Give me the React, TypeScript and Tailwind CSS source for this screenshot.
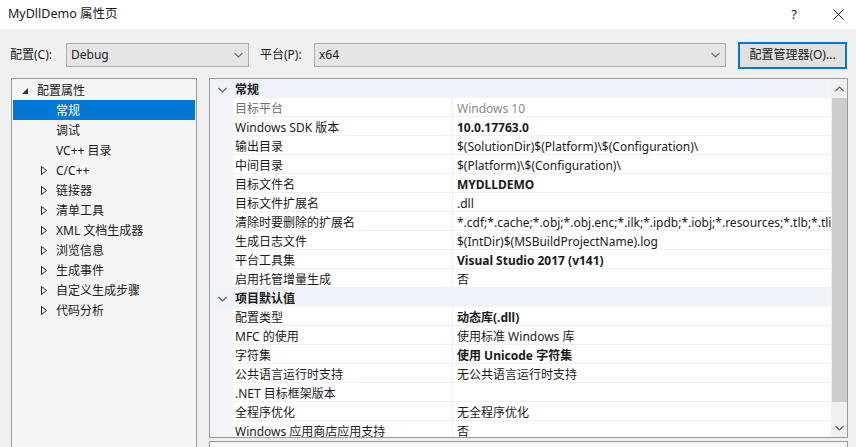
import { ReactNode } from 'react'

// 属性页数据
type Row =
  | { kind: 'cat'; name: string }
  | { kind: 'prop'; name: string; value: string; bold?: boolean; dim?: boolean }

const rows: Row[] = [
  { kind: 'cat', name: '常规' },
  { kind: 'prop', name: '目标平台', value: 'Windows 10', dim: true },
  { kind: 'prop', name: 'Windows SDK 版本', value: '10.0.17763.0', bold: true },
  { kind: 'prop', name: '输出目录', value: '$(SolutionDir)$(Platform)\\$(Configuration)\\' },
  { kind: 'prop', name: '中间目录', value: '$(Platform)\\$(Configuration)\\' },
  { kind: 'prop', name: '目标文件名', value: 'MYDLLDEMO', bold: true },
  { kind: 'prop', name: '目标文件扩展名', value: '.dll' },
  {
    kind: 'prop',
    name: '清除时要删除的扩展名',
    value: '*.cdf;*.cache;*.obj;*.obj.enc;*.ilk;*.ipdb;*.iobj;*.resources;*.tlb;*.tli;*.tlh;*.tmp;*.rsp',
  },
  { kind: 'prop', name: '生成日志文件', value: '$(IntDir)$(MSBuildProjectName).log' },
  { kind: 'prop', name: '平台工具集', value: 'Visual Studio 2017 (v141)', bold: true },
  { kind: 'prop', name: '启用托管增量生成', value: '否' },
  { kind: 'cat', name: '项目默认值' },
  { kind: 'prop', name: '配置类型', value: '动态库(.dll)', bold: true },
  { kind: 'prop', name: 'MFC 的使用', value: '使用标准 Windows 库' },
  { kind: 'prop', name: '字符集', value: '使用 Unicode 字符集', bold: true },
  { kind: 'prop', name: '公共语言运行时支持', value: '无公共语言运行时支持' },
  { kind: 'prop', name: '.NET 目标框架版本', value: '' },
  { kind: 'prop', name: '全程序优化', value: '无全程序优化' },
  { kind: 'prop', name: 'Windows 应用商店应用支持', value: '否' },
]

const tree: { label: string; level: 0 | 1; arrow?: 'open' | 'closed'; selected?: boolean }[] = [
  { label: '配置属性', level: 0, arrow: 'open' },
  { label: '常规', level: 1, selected: true },
  { label: '调试', level: 1 },
  { label: 'VC++ 目录', level: 1 },
  { label: 'C/C++', level: 1, arrow: 'closed' },
  { label: '链接器', level: 1, arrow: 'closed' },
  { label: '清单工具', level: 1, arrow: 'closed' },
  { label: 'XML 文档生成器', level: 1, arrow: 'closed' },
  { label: '浏览信息', level: 1, arrow: 'closed' },
  { label: '生成事件', level: 1, arrow: 'closed' },
  { label: '自定义生成步骤', level: 1, arrow: 'closed' },
  { label: '代码分析', level: 1, arrow: 'closed' },
]

function Chevron({ up = false, color = '#606060' }: { up?: boolean; color?: string }) {
  return (
    <svg width="9" height="6" viewBox="0 0 9 6">
      <polyline
        points={up ? '0.5,5 4.5,1 8.5,5' : '0.5,1 4.5,5 8.5,1'}
        fill="none"
        stroke={color}
        strokeWidth="1.2"
      />
    </svg>
  )
}

function Combo({ value, className }: { value: string; className: string }) {
  return (
    <div
      className={`h-[24px] flex items-center justify-between pl-[4px] pr-[5px] bg-[#e5e5e5] border border-[#adadad] ${className}`}
    >
      <span>{value}</span>
      <Chevron color="#707070" />
    </div>
  )
}

function TreeArrow({ kind }: { kind: 'open' | 'closed' }) {
  if (kind === 'open') {
    return (
      <svg width="6" height="6" viewBox="0 0 6 6">
        <polygon points="6,0 6,6 0,6" fill="#333" />
      </svg>
    )
  }
  return (
    <svg width="6" height="9" viewBox="0 0 6 9">
      <polygon points="0.5,0.5 5.5,4.5 0.5,8.5" fill="none" stroke="#222" strokeWidth="1" />
    </svg>
  )
}

function Cell({ children, className }: { children?: ReactNode; className: string }) {
  return (
    <div className={`h-full flex items-center pt-[3px] whitespace-nowrap overflow-hidden ${className}`}>
      {children}
    </div>
  )
}

export default function App() {
  return (
    <div
      className="w-[856px] h-[447px] overflow-hidden bg-[#f0f0f0] text-[12px] leading-none text-[#1a1a1a]"
      style={{ fontFamily: '"Noto Sans", "Noto Sans CJK SC", sans-serif' }}
    >
      {/* 标题栏 */}
      <div className="h-[29px] bg-white flex items-center pl-[8px] pr-[12px]">
        <span className="text-[12.5px]">MyDllDemo 属性页</span>
        <span className="ml-auto text-[13px] text-[#222]">?</span>
        <svg className="ml-[36px]" width="11" height="11" viewBox="0 0 11 11">
          <path d="M0.5 0.5 L10.5 10.5 M10.5 0.5 L0.5 10.5" stroke="#222" strokeWidth="1" />
        </svg>
      </div>

      {/* 配置 / 平台 */}
      <div className="mt-[14px] h-[24px] flex items-center">
        <span className="ml-[10px] w-[56px]">配置(C):</span>
        <Combo value="Debug" className="w-[183px]" />
        <span className="ml-[11px] w-[54px]">平台(P):</span>
        <Combo value="x64" className="w-[412px]" />
        <div className="ml-[12px] w-[109px] h-[27px] flex items-center justify-center bg-[#e1e1e1] border-2 border-[#0078d7]">
          配置管理器(O)...
        </div>
      </div>

      <div className="mt-[11px] ml-[11px] flex gap-[12px]">
        {/* 左侧树 */}
        <div className="w-[186px] h-[380px] bg-[#f5f5f5] border border-[#9a9a9a] p-[1px]">
          {tree.map((t) => (
            <div
              key={t.label}
              className={`h-[20px] flex items-center pt-[1px] ${t.selected ? 'bg-[#0078d7] text-white' : ''}`}
            >
              <div className={`flex justify-end ${t.level === 0 ? 'w-[15px]' : 'w-[34px]'}`}>
                {t.arrow && <TreeArrow kind={t.arrow} />}
              </div>
              <span className="ml-[9px]">{t.label}</span>
            </div>
          ))}
        </div>

        {/* 右侧属性网格 */}
        <div className="flex flex-col gap-[3px]">
          <div className="w-[639px] h-[360px] bg-white border border-[#9a9a9a] flex">
            <div className="flex-1 overflow-hidden">
              {rows.map((r) =>
                r.kind === 'cat' ? (
                  <div key={r.name} className="h-[19px] flex items-center pt-[3px] bg-[#eff2f8]">
                    <div className="w-[25px] flex justify-center">
                      <Chevron />
                    </div>
                    <span className="font-bold">{r.name}</span>
                  </div>
                ) : (
                  <div key={r.name} className="h-[19px] flex bg-[#f3f4f8]">
                    <div className="flex-1 flex ml-[23px] bg-white border-b border-[#f0f0f0]">
                      <Cell
                        className={`w-[220px] pl-[2px] border-r border-[#f0f0f0] ${r.dim ? 'text-[#6d6d6d]' : ''}`}
                      >
                        {r.name}
                      </Cell>
                      <Cell
                        className={`flex-1 pl-[4px] ${r.bold ? 'font-bold' : ''} ${r.dim ? 'text-[#8a8a8a]' : ''}`}
                      >
                        {r.value}
                      </Cell>
                    </div>
                  </div>
                ),
              )}
            </div>
            {/* 滚动条 */}
            <div className="w-[16px] bg-[#f0f0f0] flex flex-col items-center">
              <div className="h-[19px] flex items-center">
                <Chevron up />
              </div>
              <div className="w-[15px] h-[304px] bg-[#cdcdcd]" />
              <div className="flex-1" />
              <div className="h-[19px] flex items-center">
                <Chevron />
              </div>
            </div>
          </div>
          <div className="w-[639px] h-[40px] bg-[#f5f5f5] border border-[#9a9a9a]" />
        </div>
      </div>
    </div>
  )
}
